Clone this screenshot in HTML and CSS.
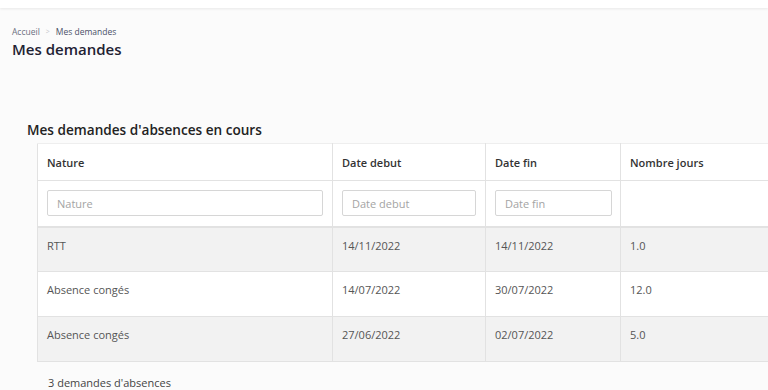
FILE: index.html
```html
<!DOCTYPE html>
<html lang="fr">
<head>
    <meta charset="UTF-8">
    <meta name="viewport" content="width=device-width, initial-scale=1.0">
    <title>Mes demandes</title>
    <link rel="stylesheet" href="styles.css">
</head>
<body>
    <div class="topbar"></div>

    <div class="page-header">
        <nav class="breadcrumb">
            <a href="#">Accueil</a>
            <span class="sep">&gt;</span>
            <span class="current">Mes demandes</span>
        </nav>
        <h1>Mes demandes</h1>
    </div>

    <div class="section">
        <h3>Mes demandes d'absences en cours</h3>

        <div class="table-wrap">
            <table class="table">
                <colgroup>
                    <col class="col-nature">
                    <col class="col-debut">
                    <col class="col-fin">
                    <col class="col-jours">
                </colgroup>
                <thead>
                    <tr>
                        <th>Nature</th>
                        <th>Date debut</th>
                        <th>Date fin</th>
                        <th>Nombre jours</th>
                    </tr>
                    <tr class="filters">
                        <td><input type="text" class="form-control" placeholder="Nature"></td>
                        <td><input type="text" class="form-control" placeholder="Date debut"></td>
                        <td><input type="text" class="form-control input-fin" placeholder="Date fin"></td>
                        <td></td>
                    </tr>
                </thead>
                <tbody>
                    <tr>
                        <td>RTT</td>
                        <td>14/11/2022</td>
                        <td>14/11/2022</td>
                        <td>1.0</td>
                    </tr>
                    <tr>
                        <td>Absence congés</td>
                        <td>14/07/2022</td>
                        <td>30/07/2022</td>
                        <td>12.0</td>
                    </tr>
                    <tr>
                        <td>Absence congés</td>
                        <td>27/06/2022</td>
                        <td>02/07/2022</td>
                        <td>5.0</td>
                    </tr>
                </tbody>
            </table>
        </div>

        <p class="count">3 demandes d'absences</p>
    </div>
</body>
</html>
```

FILE: styles.css
```css
* {
    box-sizing: border-box;
    margin: 0;
    padding: 0;
}

html, body {
    overflow: hidden;
}

body {
    font-family: "Open Sans", Arial, sans-serif;
    background-color: #fbfbfb;
    color: #333;
    height: 390px;
}

.topbar {
    height: 8px;
    background-color: #fff;
    box-shadow: 0 1px 3px rgba(0,0,0,0.08);
}

.page-header {
    padding: 17px 12px 0;
}

.breadcrumb {
    font-size: 8.5px;
    color: #6b6f80;
    display: flex;
    gap: 6px;
    align-items: center;
    height: 12px;
}

.breadcrumb a {
    color: #6b6f80;
    text-decoration: none;
}

.breadcrumb .sep {
    color: #c4c6cc;
    font-size: 7px;
}

.breadcrumb .current {
    color: #4a5068;
}

h1 {
    font-size: 15px;
    font-weight: 600;
    color: #1f2233;
    margin-top: 1px;
    line-height: 22px;
}

.section {
    padding: 61px 0 0 27px;
}

h3 {
    font-size: 13.6px;
    font-weight: 600;
    color: #222;
    line-height: 18px;
    margin-bottom: 4px;
}

.table-wrap {
    margin-left: 10px;
    overflow: hidden;
}

.table {
    width: 820px;
    border-collapse: collapse;
    table-layout: fixed;
    font-size: 11px;
    color: #555;
    background-color: #fff;
}

.col-nature { width: 295px; }
.col-debut { width: 153px; }
.col-fin { width: 135px; }
.col-jours { width: 237px; }

.table th,
.table td {
    border: 1px solid #e2e2e2;
    text-align: left;
    padding: 0 9px;
}

.table th {
    height: 37px;
    font-weight: 600;
    color: #333;
    border-top-color: #eee;
}

.filters td {
    height: 46px;
    border-bottom: 2px solid #e2e2e2;
}

.table tbody td {
    height: 45px;
    vertical-align: top;
    padding-top: 10px;
}

.table tbody tr:nth-child(odd) {
    background-color: #f2f2f2;
}

.form-control {
    width: 100%;
    height: 26px;
    border: 1px solid #d6d6d6;
    border-radius: 2px;
    padding: 0 9px;
    font-family: inherit;
    font-size: 11px;
    color: #555;
    background-color: #fff;
}

.input-fin {
    width: 117px;
}

.form-control::placeholder {
    color: #a4a4a4;
}

.count {
    font-size: 11px;
    color: #444;
    margin: 13px 0 0 21px;
}
```
